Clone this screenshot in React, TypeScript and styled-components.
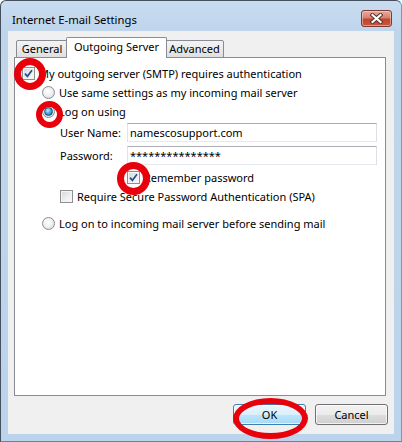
import React from 'react';
import styled, { createGlobalStyle } from 'styled-components';

const GlobalStyle = createGlobalStyle`
  html, body {
    margin: 0;
    padding: 0;
    background: #ffffff;
  }
  * {
    box-sizing: border-box;
  }
`;

const Frame = styled.div`
  position: relative;
  width: 402px;
  height: 442px;
  border: 1px solid #44505e;
  border-right-color: #2fb6e6;
  border-bottom-color: #1f9fd0;
  border-radius: 6px 6px 0 0;
  background: linear-gradient(#c9dcf0, #bfd5ec 30px, #bcd4eb);
  padding: 0 7px 7px 7px;
  display: flex;
  flex-direction: column;
  font-family: 'Noto Sans', 'DejaVu Sans', sans-serif;
  font-size: 11px;
  color: #000;
  overflow: hidden;
`;

const TitleBar = styled.div`
  height: 30px;
  display: flex;
  align-items: flex-start;
  justify-content: space-between;
  padding-left: 4px;
`;

const Title = styled.div`
  margin-top: 11px;
  line-height: 16px;
  font-size: 11.3px;
  color: #000;
`;

const CloseButton = styled.div`
  margin-top: 9px;
  margin-right: 2px;
  width: 31px;
  height: 17px;
  border: 1px solid #7b3a33;
  border-radius: 3px;
  background: linear-gradient(#e9a99d 0%, #d7826f 45%, #c0452f 55%, #c9563d 100%);
  box-shadow: inset 0 0 0 1px rgba(255, 220, 210, 0.5);
  display: flex;
  align-items: center;
  justify-content: center;
`;

const Client = styled.div`
  flex: 1;
  background: #f0f0f0;
  display: flex;
  flex-direction: column;
  padding: 6px 7px 9px 6px;
`;

const TabStrip = styled.div`
  display: flex;
  align-items: flex-end;
  height: 21px;
  margin-bottom: -1px;
  padding-left: 2px;
  position: relative;
  z-index: 1;
`;

const Tab = styled.div<{ $active?: boolean; $w: number }>`
  width: ${(p) => p.$w}px;
  height: ${(p) => (p.$active ? 21 : 18)}px;
  border: 1px solid #898c95;
  border-bottom: ${(p) => (p.$active ? 'none' : '1px solid #898c95')};
  border-radius: 2px 2px 0 0;
  margin: ${(p) => (p.$active ? '0 -2px' : '0')};
  position: relative;
  z-index: ${(p) => (p.$active ? 2 : 1)};
  background: ${(p) =>
    p.$active ? '#ffffff' : 'linear-gradient(#f3f3f3, #ebebeb 50%, #dfdfdf)'};
  display: flex;
  align-items: center;
  justify-content: center;
  padding-bottom: ${(p) => (p.$active ? 2 : 0)}px;
  line-height: 14px;
`;

const Panel = styled.div`
  flex: 1;
  margin-right: 1px;
  background: #ffffff;
  border: 1px solid #898c95;
  padding: 6px 8px 0 7px;
  display: flex;
  flex-direction: column;
`;

const Row = styled.div<{ $indent: number; $h: number; $top?: number }>`
  display: flex;
  align-items: center;
  height: ${(p) => p.$h}px;
  padding-left: ${(p) => p.$indent}px;
  margin-top: ${(p) => p.$top ?? 0}px;
  white-space: nowrap;
`;

const Box = styled.span`
  width: 13px;
  height: 13px;
  flex: none;
  border: 1px solid #8e8f8f;
  background: linear-gradient(135deg, #d3d6db 0%, #eceef0 55%, #fbfbfb 100%);
  box-shadow: inset 0 0 0 1px #f4f4f4;
  display: flex;
  align-items: center;
  justify-content: center;
  margin-right: 4px;
`;

const Radio = styled.span<{ $on?: boolean }>`
  width: 13px;
  height: 13px;
  flex: none;
  border-radius: 50%;
  border: 1px solid #8a8d92;
  background: radial-gradient(circle at 45% 40%, #ffffff 0%, #f1f1f1 45%, #cfd1d4 100%);
  display: flex;
  align-items: center;
  justify-content: center;
  margin-right: 4px;

  &::after {
    content: '';
    display: ${(p) => (p.$on ? 'block' : 'none')};
    width: 7px;
    height: 7px;
    border-radius: 50%;
    border: 1px solid #1a4f78;
    background: radial-gradient(circle at 40% 35%, #c9ecfd 0%, #53b2e6 40%, #12609a 100%);
  }
`;

const FieldLabel = styled.span`
  width: 67px;
  flex: none;
`;

const TextBox = styled.input`
  width: 250px;
  height: 19px;
  border: 1px solid #abadb3;
  border-color: #abadb3 #dbdfe6 #e3e9ef #e2e3ea;
  outline: none;
  padding: 0 0 0 2px;
  font-family: inherit;
  font-size: 11px;
  color: #000;
  background: #fff;
`;

const ButtonRow = styled.div`
  display: flex;
  justify-content: flex-end;
  gap: 9px;
  margin-top: 8px;
  margin-right: -1px;
`;

const Button = styled.div<{ $default?: boolean }>`
  width: 73px;
  height: 21px;
  border-radius: 3px;
  border: 1px solid ${(p) => (p.$default ? '#3c7fb1' : '#707070')};
  background: ${(p) =>
    p.$default
      ? 'linear-gradient(#eaf6fd 0%, #d9f0fc 50%, #bee6fd 50%, #a7d9f5 100%)'
      : 'linear-gradient(#f2f2f2 0%, #ebebeb 50%, #dddddd 50%, #cfcfcf 100%)'};
  box-shadow: inset 0 0 0 1px rgba(255, 255, 255, 0.7);
  display: flex;
  align-items: center;
  justify-content: center;
`;

const Ring = styled.div<{ $x: number; $y: number; $w: number; $h: number; $t: number }>`
  position: absolute;
  left: ${(p) => p.$x}px;
  top: ${(p) => p.$y}px;
  width: ${(p) => p.$w}px;
  height: ${(p) => p.$h}px;
  border: ${(p) => p.$t}px solid #e8000b;
  border-radius: 50%;
  z-index: 5;
`;

const Check = () => (
  <svg width="9" height="9" viewBox="0 0 9 9">
    <path d="M1 4.6 L3.4 7.3 L8 1.2" fill="none" stroke="#2b4a8f" strokeWidth="1.7" />
  </svg>
);

const CloseGlyph = () => (
  <svg width="13" height="11" viewBox="0 0 13 11">
    <path d="M2.5 2 L10.5 9 M10.5 2 L2.5 9" stroke="#47342f" strokeWidth="4" strokeLinecap="square" />
    <path d="M2.5 2 L10.5 9 M10.5 2 L2.5 9" stroke="#ffffff" strokeWidth="2.2" strokeLinecap="square" />
  </svg>
);

export default function App() {
  return (
    <>
      <GlobalStyle />
      <Frame>
        <TitleBar>
          <Title>Internet E-mail Settings</Title>
          <CloseButton>
            <CloseGlyph />
          </CloseButton>
        </TitleBar>
        <Client>
          <TabStrip>
            <Tab $w={52}>General</Tab>
            <Tab $w={101} $active>Outgoing Server</Tab>
            <Tab $w={59}>Advanced</Tab>
          </TabStrip>
          <Panel>
            <Row $indent={0} $h={19}>
              <Box><Check /></Box>
              My outgoing server (SMTP) requires authentication
            </Row>
            <Row $indent={20} $h={19}>
              <Radio />
              Use same settings as my incoming mail server
            </Row>
            <Row $indent={20} $h={19}>
              <Radio $on />
              Log on using
            </Row>
            <Row $indent={38} $h={23}>
              <FieldLabel>User Name:</FieldLabel>
              <TextBox readOnly value="namescosupport.com" />
            </Row>
            <Row $indent={38} $h={23}>
              <FieldLabel>Password:</FieldLabel>
              <TextBox readOnly value="***************" />
            </Row>
            <Row $indent={105} $h={20}>
              <Box><Check /></Box>
              Remember password
            </Row>
            <Row $indent={38} $h={19}>
              <Box />
              Require Secure Password Authentication (SPA)
            </Row>
            <Row $indent={20} $h={19} $top={8}>
              <Radio />
              Log on to incoming mail server before sending mail
            </Row>
          </Panel>
          <ButtonRow>
            <Button $default>OK</Button>
            <Button>Cancel</Button>
          </ButtonRow>
        </Client>
        <Ring $x={13} $y={57} $w={32} $h={32} $t={7} />
        <Ring $x={35} $y={100} $w={27} $h={27} $t={6} />
        <Ring $x={116} $y={161} $w={33} $h={33} $t={7} />
        <Ring $x={232} $y={397} $w={75} $h={41} $t={6} />
      </Frame>
    </>
  );
}
